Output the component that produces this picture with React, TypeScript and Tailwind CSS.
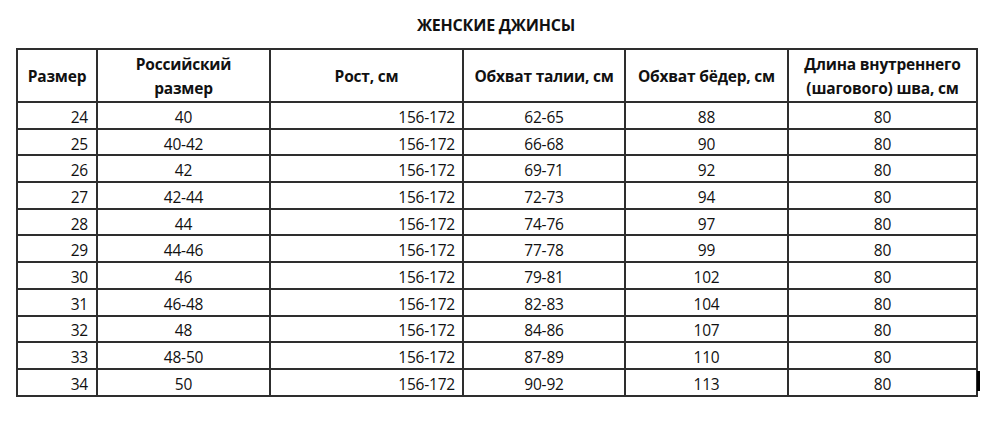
const rows: [string, string, string, string, string, string][] = [
  ["24", "40", "156-172", "62-65", "88", "80"],
  ["25", "40-42", "156-172", "66-68", "90", "80"],
  ["26", "42", "156-172", "69-71", "92", "80"],
  ["27", "42-44", "156-172", "72-73", "94", "80"],
  ["28", "44", "156-172", "74-76", "97", "80"],
  ["29", "44-46", "156-172", "77-78", "99", "80"],
  ["30", "46", "156-172", "79-81", "102", "80"],
  ["31", "46-48", "156-172", "82-83", "104", "80"],
  ["32", "48", "156-172", "84-86", "107", "80"],
  ["33", "48-50", "156-172", "87-89", "110", "80"],
  ["34", "50", "156-172", "90-92", "113", "80"],
];

const cell = "border-2 border-[#2e2e2e] p-0";

export default function App() {
  return (
    <div
      className="w-[1000px] h-[435px] bg-white text-[#111] pt-[14px]"
      style={{ fontFamily: '"Open Sans", "Noto Sans", sans-serif' }}
    >
      <div className="relative ml-[16px] w-[960px]">
        <h1 className="text-center font-bold text-[16px] leading-[22px] tracking-[-0.2px]">
          ЖЕНСКИЕ ДЖИНСЫ
        </h1>
        <table className="mt-[12px] w-[960px] border-collapse table-fixed text-[15.5px] tracking-[-0.2px]">
          <colgroup>
            <col className="w-[80px]" />
            <col className="w-[173px]" />
            <col className="w-[193px]" />
            <col className="w-[162px]" />
            <col className="w-[163px]" />
            <col className="w-[189px]" />
          </colgroup>
          <thead>
            <tr className="h-[53px] font-bold leading-[24px]">
              <th className={`${cell} text-center`}>Размер</th>
              <th className={`${cell} text-center`}>
                Российский
                <br />
                размер
              </th>
              <th className={`${cell} text-center`}>Рост, см</th>
              <th className={`${cell} text-center`}>Обхват талии, см</th>
              <th className={`${cell} text-center`}>Обхват бёдер, см</th>
              <th className={`${cell} text-center`}>
                Длина внутреннего
                <br />
                (шагового) шва, см
              </th>
            </tr>
          </thead>
          <tbody>
            {rows.map((r) => (
              <tr key={r[0]} className="h-[26.7px] leading-[20px] font-medium">
                <td className={`${cell} text-right pr-[8px] pt-[3px]`}>{r[0]}</td>
                <td className={`${cell} text-center pt-[3px]`}>{r[1]}</td>
                <td className={`${cell} text-right pr-[7px] pt-[3px]`}>{r[2]}</td>
                <td className={`${cell} text-center pt-[3px]`}>{r[3]}</td>
                <td className={`${cell} text-center pt-[3px]`}>{r[4]}</td>
                <td className={`${cell} text-center pt-[3px]`}>{r[5]}</td>
              </tr>
            ))}
          </tbody>
        </table>
        {/* text cursor next to the last row */}
        <div className="absolute left-[961px] bottom-[6px] w-[3px] h-[20px] bg-black" />
      </div>
    </div>
  );
}
